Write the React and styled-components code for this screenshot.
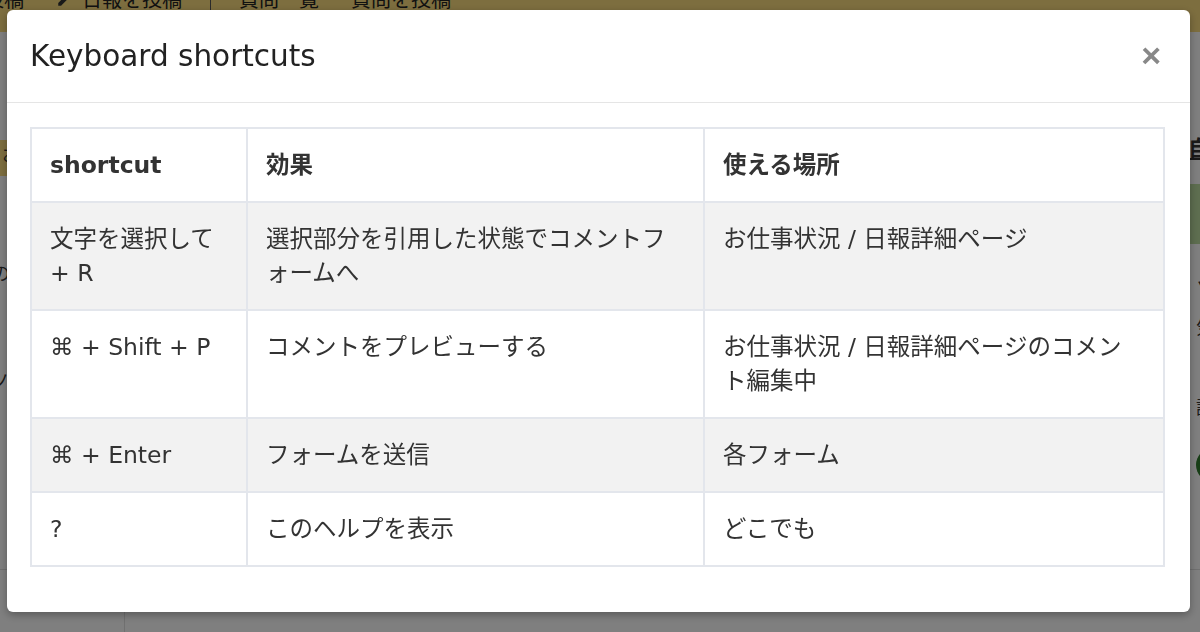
import styled, { createGlobalStyle } from "styled-components";

const GlobalStyle = createGlobalStyle`
  html, body {
    margin: 0;
    padding: 0;
    background: #ffffff;
    color: #333333;
    font-family: "DejaVu Sans", "Noto Sans CJK JP", sans-serif;
    overflow: hidden;
  }
`;

const shortcuts = [
  { keys: "文字を選択して + R", effect: "選択部分を引用した状態でコメントフォームへ", place: "お仕事状況 / 日報詳細ページ" },
  { keys: "⌘ + Shift + P", effect: "コメントをプレビューする", place: "お仕事状況 / 日報詳細ページのコメント編集中" },
  { keys: "⌘ + Enter", effect: "フォームを送信", place: "各フォーム" },
  { keys: "?", effect: "このヘルプを表示", place: "どこでも" },
];

export default function App() {
  return (
    <>
      <GlobalStyle />
      <Page>
        <NavBar>
          <NavItem>投稿</NavItem>
          <NavItem>
            <svg width="18" height="18" viewBox="0 0 24 24" fill="#333">
              <path d="M3 17.25V21h3.75L17.8 9.94l-3.75-3.75L3 17.25zM20.7 7.04a1 1 0 0 0 0-1.41l-2.34-2.34a1 1 0 0 0-1.41 0l-1.83 1.83 3.75 3.75 1.83-1.83z" />
            </svg>
            日報を投稿
          </NavItem>
          <NavDivider />
          <NavItem>質問一覧</NavItem>
          <NavItem>質問を投稿</NavItem>
        </NavBar>
        <Content>
          <Sidebar>
            <SideLabel>お</SideLabel>
            <SideText>のする請</SideText>
            <SideText>ノ</SideText>
          </Sidebar>
          <Main />
          <Aside>
            <AsideTitle>自動</AsideTitle>
            <AsideNotice>お知らせあります</AsideNotice>
            <AsideText>ソ 気 ・ 請</AsideText>
            <Avatar />
          </Aside>
        </Content>
        <Footer>
          <FooterLeft />
        </Footer>
      </Page>
      <Backdrop>
        <Modal>
          <ModalHeader>
            <Title>Keyboard shortcuts</Title>
            <Close aria-label="close">×</Close>
          </ModalHeader>
          <ModalBody>
            <Table>
              <colgroup>
                <col style={{ width: 216 }} />
                <col style={{ width: 457 }} />
                <col />
              </colgroup>
              <thead>
                <tr>
                  <Th>shortcut</Th>
                  <Th>効果</Th>
                  <Th>使える場所</Th>
                </tr>
              </thead>
              <tbody>
                {shortcuts.map((s, i) => (
                  <Row key={s.keys} $striped={i % 2 === 0}>
                    <Td>{s.keys}</Td>
                    <Td>{s.effect}</Td>
                    <Td>{s.place}</Td>
                  </Row>
                ))}
              </tbody>
            </Table>
          </ModalBody>
        </Modal>
      </Backdrop>
    </>
  );
}

const Page = styled.div`
  width: 1200px;
  height: 632px;
  display: flex;
  flex-direction: column;
  font-family: "Noto Sans CJK JP", sans-serif;
`;

const NavBar = styled.div`
  height: 50px;
  background: #fadc7e;
  display: flex;
  align-items: flex-start;
  gap: 32px;
  margin-top: -18px;
  padding-top: 2px;
  box-sizing: border-box;
`;

const NavItem = styled.div`
  display: flex;
  align-items: center;
  gap: 8px;
  font-size: 20px;
  color: #222;

  &:first-child {
    margin-left: -16px;
  }
`;

const NavDivider = styled.div`
  width: 1px;
  height: 32px;
  background: #555;
  margin: 0 -4px;
`;

const Content = styled.div`
  flex: 1;
  display: flex;
`;

const Sidebar = styled.div`
  width: 124px;
  padding-top: 108px;
  display: flex;
  flex-direction: column;
  gap: 84px;
`;

const SideLabel = styled.div`
  height: 36px;
  background: #fadc7e;
  font-size: 18px;
  padding-left: 2px;
`;

const SideText = styled.div`
  font-size: 18px;
  line-height: 24px;
  margin-left: -8px;
`;

const Main = styled.div`
  flex: 1;
`;

const Aside = styled.div`
  width: 200px;
  padding-top: 98px;
  display: flex;
  flex-direction: column;
  gap: 22px;
  margin-right: -190px;
  margin-left: -10px;
`;

const AsideTitle = styled.div`
  font-weight: 700;
  font-size: 22px;
  text-decoration: underline;
  margin-left: -2px;
`;

const AsideNotice = styled.div`
  background: #bcdca0;
  height: 60px;
  color: #2d6b1f;
  font-size: 20px;
  padding: 6px 10px;
  box-sizing: border-box;
`;

const AsideText = styled.div`
  font-size: 18px;
  line-height: 40px;
  width: 20px;
  padding-left: 6px;
`;

const Avatar = styled.div`
  width: 34px;
  height: 34px;
  border-radius: 50%;
  background: #2f7b2c;
  margin-left: 6px;
`;

const Footer = styled.div`
  height: 62px;
  border-top: 1px solid #e0e0e0;
  display: flex;
`;

const FooterLeft = styled.div`
  width: 124px;
  border-right: 1px solid #e0e0e0;
`;

const Backdrop = styled.div`
  position: fixed;
  inset: 0;
  background: rgba(0, 0, 0, 0.5);
  display: flex;
  justify-content: center;
  align-items: flex-start;
  padding-top: 10px;
`;

const Modal = styled.div`
  width: 1183px;
  height: 602px;
  margin-left: -3px;
  background: #ffffff;
  border-radius: 6px;
  box-shadow: 0 3px 9px rgba(0, 0, 0, 0.3);
  box-sizing: border-box;
  display: flex;
  flex-direction: column;
`;

const ModalHeader = styled.div`
  height: 93px;
  box-sizing: border-box;
  padding: 0 26px 0 23px;
  border-bottom: 1px solid #e5e5e5;
  display: flex;
  align-items: center;
  justify-content: space-between;
`;

const Title = styled.h4`
  margin: 0;
  font-size: 29.5px;
  font-weight: 400;
  color: #222;
`;

const Close = styled.span`
  font-size: 34px;
  font-weight: 700;
  color: #888;
  line-height: 1;
  margin-top: -2px;
  margin-right: 3px;
  font-family: "Liberation Sans", sans-serif;
`;

const ModalBody = styled.div`
  padding: 24px 25px 0 23px;
`;

const Table = styled.table`
  width: 1135px;
  border-collapse: collapse;
  table-layout: fixed;
  font-size: 23.5px;
  line-height: 34px;
  color: #333;
  border: 2px solid #e3e6ec;
`;

const Th = styled.th`
  text-align: left;
  font-weight: 700;
  padding: 19px 22px 19px 18px;
  border: 2px solid #e3e6ec;
  vertical-align: top;
`;

const Row = styled.tr`
  background: ${(p) => (p.$striped ? "#f2f2f2" : "#ffffff")};
`;

const Td = styled.td`
  padding: 19px 22px 19px 18px;
  border: 2px solid #e3e6ec;
  vertical-align: top;
  line-break: loose;
`;
